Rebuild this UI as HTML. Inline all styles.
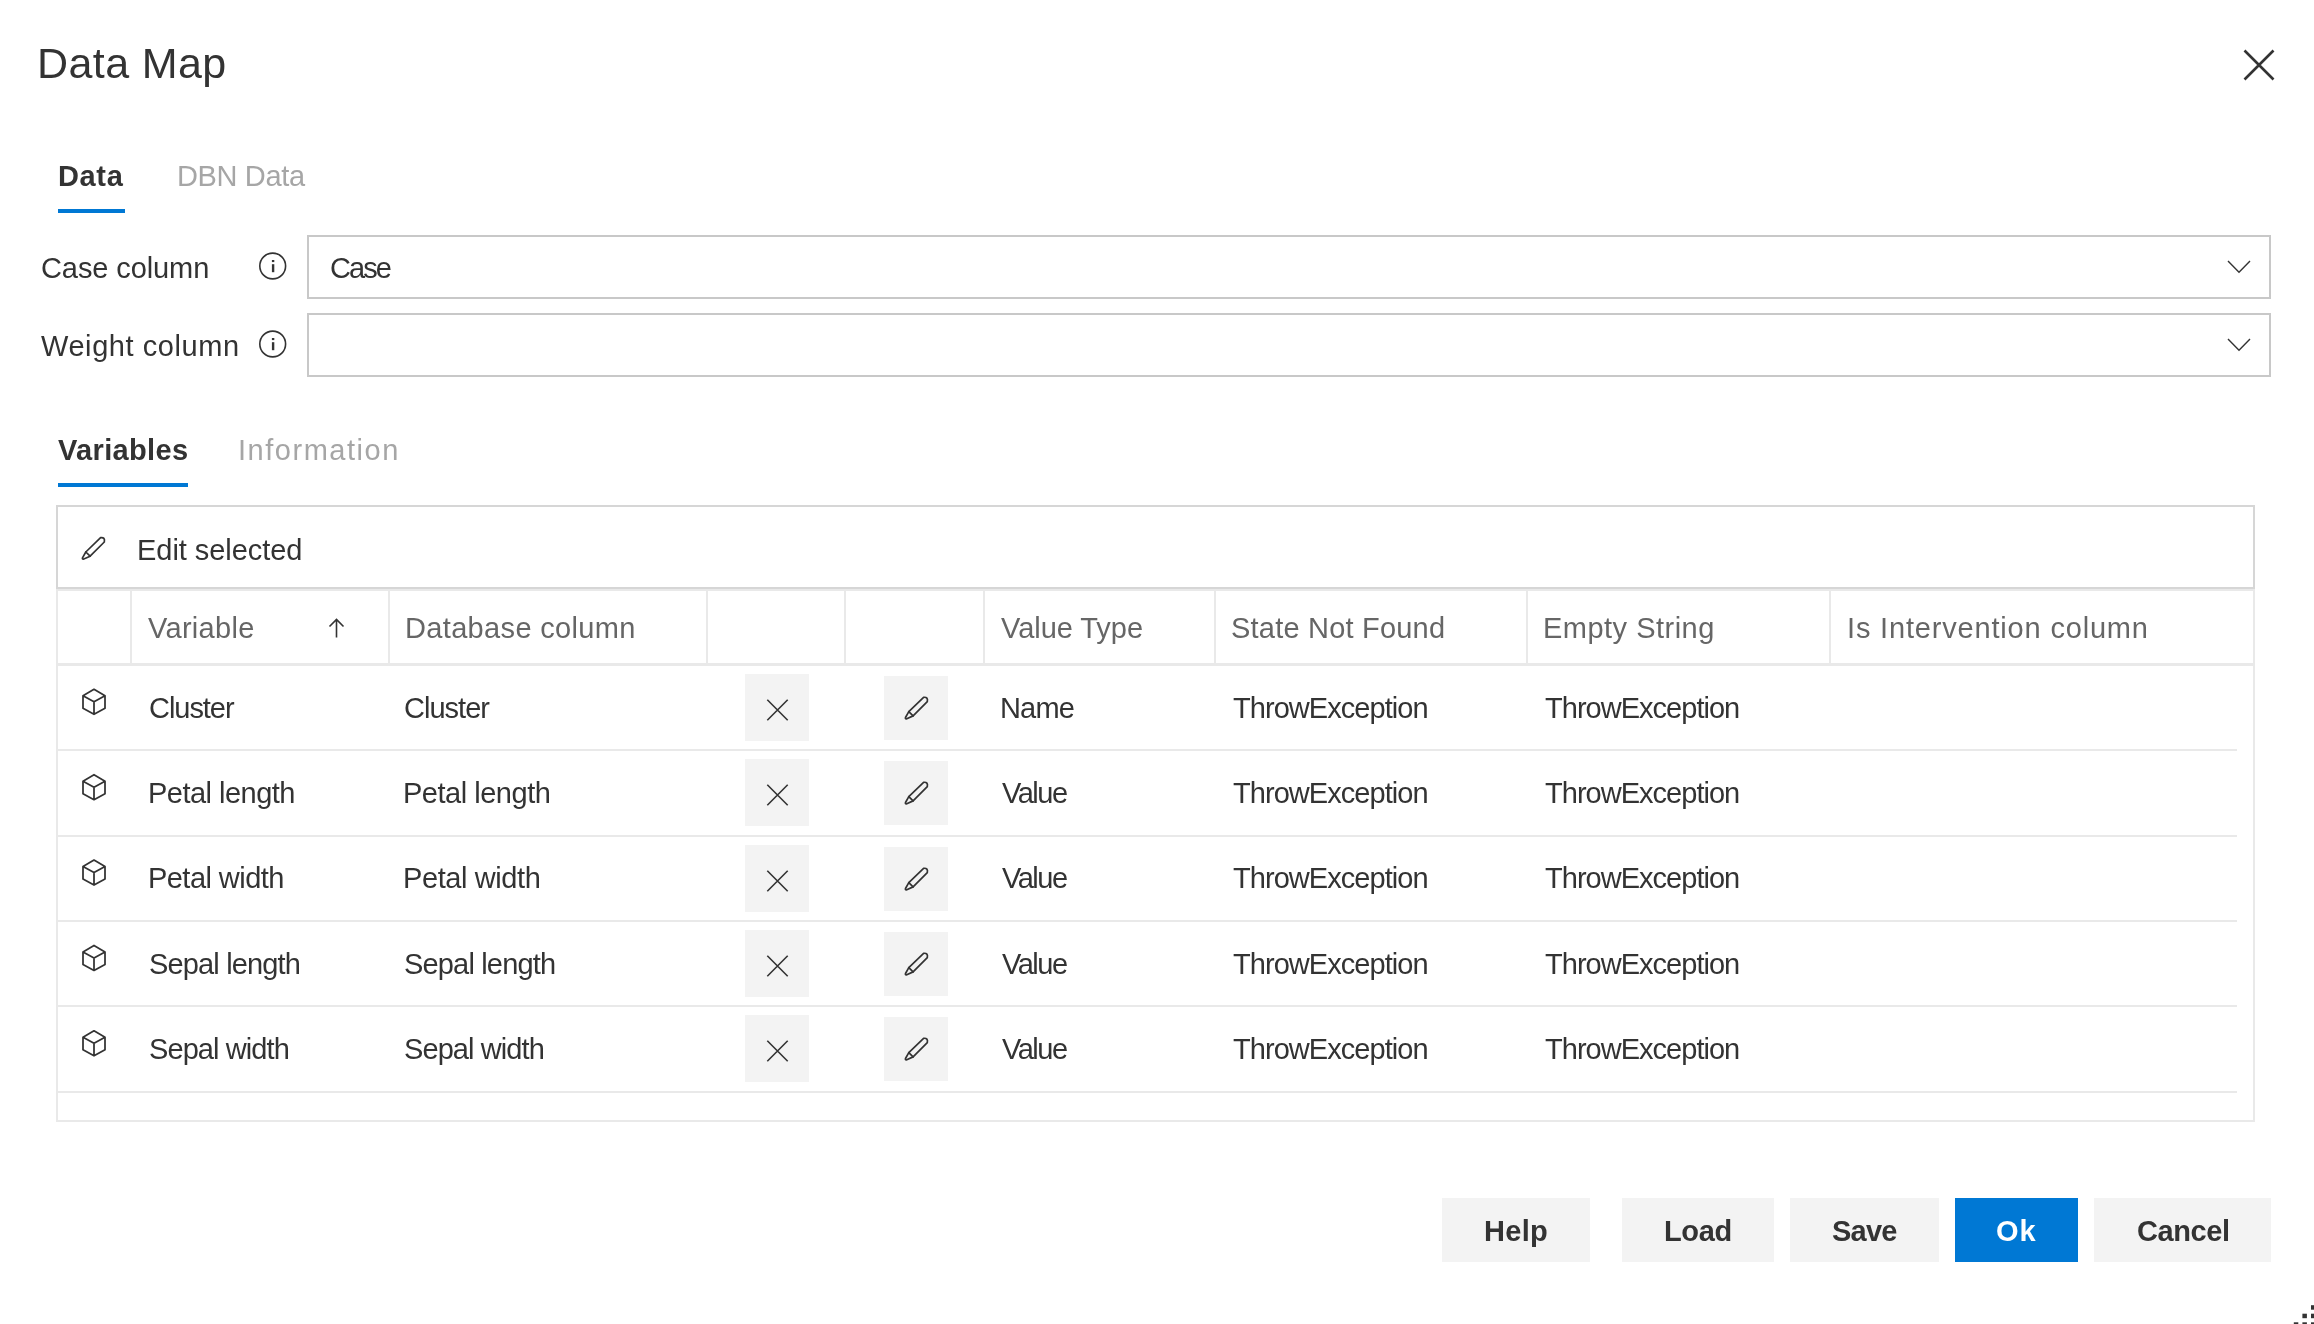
<!DOCTYPE html>
<html><head><meta charset="utf-8"><title>Data Map</title>
<style>
html,body{margin:0;padding:0;background:#fff;}
body{width:2314px;height:1324px;position:relative;overflow:hidden;font-family:"Liberation Sans",sans-serif;}
.t{position:absolute;white-space:nowrap;line-height:normal;will-change:transform;}
svg{position:absolute;left:0;top:0;}
</style></head><body>
<div style="position:absolute;left:58px;top:209px;width:67px;height:4px;background:#0078d4"></div><div style="position:absolute;left:58px;top:483px;width:130px;height:4px;background:#0078d4"></div><div style="position:absolute;left:307px;top:235px;width:1964px;height:64px;box-sizing:border-box;border:2px solid #c8c8c8;background:#fff"></div><div style="position:absolute;left:307px;top:313px;width:1964px;height:64px;box-sizing:border-box;border:2px solid #c8c8c8;background:#fff"></div><div style="position:absolute;left:56px;top:505px;width:2199px;height:84px;box-sizing:border-box;border:2px solid #d6d6d6;border-bottom-width:2px"></div><div style="position:absolute;left:56px;top:589px;width:2199px;height:533px;box-sizing:border-box;border:2px solid #e9e9e9;border-top-width:2px"></div><div style="position:absolute;left:58px;top:663px;width:2195px;height:3px;background:#e9e9e9"></div><div style="position:absolute;left:130px;top:591px;width:2px;height:72px;background:#e9e9e9"></div><div style="position:absolute;left:388px;top:591px;width:2px;height:72px;background:#e9e9e9"></div><div style="position:absolute;left:706px;top:591px;width:2px;height:72px;background:#e9e9e9"></div><div style="position:absolute;left:844px;top:591px;width:2px;height:72px;background:#e9e9e9"></div><div style="position:absolute;left:983px;top:591px;width:2px;height:72px;background:#e9e9e9"></div><div style="position:absolute;left:1214px;top:591px;width:2px;height:72px;background:#e9e9e9"></div><div style="position:absolute;left:1526px;top:591px;width:2px;height:72px;background:#e9e9e9"></div><div style="position:absolute;left:1829px;top:591px;width:2px;height:72px;background:#e9e9e9"></div><div style="position:absolute;left:58px;top:749px;width:2179px;height:2px;background:#e9e9e9"></div><div style="position:absolute;left:58px;top:835px;width:2179px;height:2px;background:#e9e9e9"></div><div style="position:absolute;left:58px;top:920px;width:2179px;height:2px;background:#e9e9e9"></div><div style="position:absolute;left:58px;top:1005px;width:2179px;height:2px;background:#e9e9e9"></div><div style="position:absolute;left:58px;top:1091px;width:2179px;height:2px;background:#e9e9e9"></div><div style="position:absolute;left:745px;top:674px;width:64px;height:67px;background:#f3f3f3"></div><div style="position:absolute;left:884px;top:676px;width:64px;height:64px;background:#f3f3f3"></div><div style="position:absolute;left:745px;top:759px;width:64px;height:67px;background:#f3f3f3"></div><div style="position:absolute;left:884px;top:761px;width:64px;height:64px;background:#f3f3f3"></div><div style="position:absolute;left:745px;top:845px;width:64px;height:67px;background:#f3f3f3"></div><div style="position:absolute;left:884px;top:847px;width:64px;height:64px;background:#f3f3f3"></div><div style="position:absolute;left:745px;top:930px;width:64px;height:67px;background:#f3f3f3"></div><div style="position:absolute;left:884px;top:932px;width:64px;height:64px;background:#f3f3f3"></div><div style="position:absolute;left:745px;top:1015px;width:64px;height:67px;background:#f3f3f3"></div><div style="position:absolute;left:884px;top:1017px;width:64px;height:64px;background:#f3f3f3"></div><div style="position:absolute;left:1442px;top:1198px;width:148px;height:64px;background:#f3f3f3"></div><div style="position:absolute;left:1622px;top:1198px;width:152px;height:64px;background:#f3f3f3"></div><div style="position:absolute;left:1790px;top:1198px;width:149px;height:64px;background:#f3f3f3"></div><div style="position:absolute;left:1955px;top:1198px;width:123px;height:64px;background:#0078d4"></div><div style="position:absolute;left:2094px;top:1198px;width:177px;height:64px;background:#f3f3f3"></div>
<div class="t" id="title" style="left:37.00px;top:39.00px;font-size:43px;font-weight:400;color:#333;letter-spacing:0.407px">Data Map</div><div class="t" id="tab_data" style="left:58.00px;top:160.20px;font-size:29px;font-weight:700;color:#333;letter-spacing:0.633px">Data</div><div class="t" id="tab_dbn" style="left:177.10px;top:160.20px;font-size:29px;font-weight:400;color:#a6a6a6;letter-spacing:-0.353px">DBN Data</div><div class="t" id="lbl_case" style="left:40.60px;top:252.00px;font-size:29px;font-weight:400;color:#333;letter-spacing:-0.095px">Case column</div><div class="t" id="lbl_weight" style="left:40.70px;top:330.30px;font-size:29px;font-weight:400;color:#333;letter-spacing:0.570px">Weight column</div><div class="t" id="sel_case" style="left:329.80px;top:251.60px;font-size:29px;font-weight:400;color:#333;letter-spacing:-1.900px">Case</div><div class="t" id="tab_vars" style="left:58.20px;top:434.00px;font-size:29px;font-weight:700;color:#333;letter-spacing:0.333px">Variables</div><div class="t" id="tab_info" style="left:238.10px;top:434.00px;font-size:29px;font-weight:400;color:#a6a6a6;letter-spacing:1.520px">Information</div><div class="t" id="edit" style="left:136.80px;top:534.20px;font-size:29px;font-weight:400;color:#333;letter-spacing:-0.047px">Edit selected</div><div class="t" id="h_var" style="left:147.90px;top:612.30px;font-size:29px;font-weight:400;color:#666;letter-spacing:0.299px">Variable</div><div class="t" id="h_db" style="left:404.60px;top:612.30px;font-size:29px;font-weight:400;color:#666;letter-spacing:0.339px">Database column</div><div class="t" id="h_vt" style="left:1000.90px;top:612.30px;font-size:29px;font-weight:400;color:#666;letter-spacing:-0.042px">Value Type</div><div class="t" id="h_snf" style="left:1231.20px;top:612.30px;font-size:29px;font-weight:400;color:#666;letter-spacing:0.204px">State Not Found</div><div class="t" id="h_es" style="left:1542.70px;top:612.30px;font-size:29px;font-weight:400;color:#666;letter-spacing:0.484px">Empty String</div><div class="t" id="h_ic" style="left:1846.50px;top:612.30px;font-size:29px;font-weight:400;color:#666;letter-spacing:0.823px">Is Intervention column</div><div class="t" id="r0_var" style="left:148.60px;top:692.20px;font-size:29px;font-weight:400;color:#333;letter-spacing:-1.045px">Cluster</div><div class="t" id="r0_db" style="left:404.40px;top:692.20px;font-size:29px;font-weight:400;color:#333;letter-spacing:-0.982px">Cluster</div><div class="t" id="r0_vt" style="left:999.50px;top:692.20px;font-size:29px;font-weight:400;color:#333;letter-spacing:-0.823px">Name</div><div class="t" id="r0_snf" style="left:1233.00px;top:692.20px;font-size:29px;font-weight:400;color:#333;letter-spacing:-0.950px">ThrowException</div><div class="t" id="r0_es" style="left:1545.00px;top:692.20px;font-size:29px;font-weight:400;color:#333;letter-spacing:-0.979px">ThrowException</div><div class="t" id="r1_var" style="left:147.60px;top:777.00px;font-size:29px;font-weight:400;color:#333;letter-spacing:-0.518px">Petal length</div><div class="t" id="r1_db" style="left:403.40px;top:777.00px;font-size:29px;font-weight:400;color:#333;letter-spacing:-0.484px">Petal length</div><div class="t" id="r1_vt" style="left:1001.50px;top:777.00px;font-size:29px;font-weight:400;color:#333;letter-spacing:-1.472px">Value</div><div class="t" id="r1_snf" style="left:1233.00px;top:777.00px;font-size:29px;font-weight:400;color:#333;letter-spacing:-0.950px">ThrowException</div><div class="t" id="r1_es" style="left:1545.00px;top:777.00px;font-size:29px;font-weight:400;color:#333;letter-spacing:-0.979px">ThrowException</div><div class="t" id="r2_var" style="left:147.60px;top:862.00px;font-size:29px;font-weight:400;color:#333;letter-spacing:-0.551px">Petal width</div><div class="t" id="r2_db" style="left:403.40px;top:862.00px;font-size:29px;font-weight:400;color:#333;letter-spacing:-0.399px">Petal width</div><div class="t" id="r2_vt" style="left:1001.50px;top:862.00px;font-size:29px;font-weight:400;color:#333;letter-spacing:-1.472px">Value</div><div class="t" id="r2_snf" style="left:1233.00px;top:862.00px;font-size:29px;font-weight:400;color:#333;letter-spacing:-0.950px">ThrowException</div><div class="t" id="r2_es" style="left:1545.00px;top:862.00px;font-size:29px;font-weight:400;color:#333;letter-spacing:-0.979px">ThrowException</div><div class="t" id="r3_var" style="left:148.60px;top:948.00px;font-size:29px;font-weight:400;color:#333;letter-spacing:-0.846px">Sepal length</div><div class="t" id="r3_db" style="left:404.40px;top:948.00px;font-size:29px;font-weight:400;color:#333;letter-spacing:-0.829px">Sepal length</div><div class="t" id="r3_vt" style="left:1001.50px;top:948.00px;font-size:29px;font-weight:400;color:#333;letter-spacing:-1.472px">Value</div><div class="t" id="r3_snf" style="left:1233.00px;top:948.00px;font-size:29px;font-weight:400;color:#333;letter-spacing:-0.950px">ThrowException</div><div class="t" id="r3_es" style="left:1545.00px;top:948.00px;font-size:29px;font-weight:400;color:#333;letter-spacing:-0.979px">ThrowException</div><div class="t" id="r4_var" style="left:148.60px;top:1033.20px;font-size:29px;font-weight:400;color:#333;letter-spacing:-0.912px">Sepal width</div><div class="t" id="r4_db" style="left:404.40px;top:1033.20px;font-size:29px;font-weight:400;color:#333;letter-spacing:-0.912px">Sepal width</div><div class="t" id="r4_vt" style="left:1001.50px;top:1033.20px;font-size:29px;font-weight:400;color:#333;letter-spacing:-1.472px">Value</div><div class="t" id="r4_snf" style="left:1233.00px;top:1033.20px;font-size:29px;font-weight:400;color:#333;letter-spacing:-0.950px">ThrowException</div><div class="t" id="r4_es" style="left:1545.00px;top:1033.20px;font-size:29px;font-weight:400;color:#333;letter-spacing:-0.979px">ThrowException</div><div class="t" id="b_help" style="left:1484.00px;top:1215.00px;font-size:29px;font-weight:700;color:#333;letter-spacing:0.317px">Help</div><div class="t" id="b_load" style="left:1664.10px;top:1215.00px;font-size:29px;font-weight:700;color:#333;letter-spacing:-0.380px">Load</div><div class="t" id="b_save" style="left:1831.70px;top:1215.00px;font-size:29px;font-weight:700;color:#333;letter-spacing:-0.760px">Save</div><div class="t" id="b_ok" style="left:1996.40px;top:1215.00px;font-size:29px;font-weight:700;color:#fff;letter-spacing:0.950px">Ok</div><div class="t" id="b_cancel" style="left:2136.50px;top:1215.00px;font-size:29px;font-weight:700;color:#333;letter-spacing:-0.418px">Cancel</div>
<svg width="2314" height="1324" viewBox="0 0 2314 1324"><path d="M2244.5 50.5 L2273.5 79.5 M2273.5 50.5 L2244.5 79.5" fill="none" stroke="#333" stroke-width="2.6"/><path d="M2228 261 L2239 272.3 L2250 261" fill="none" stroke="#333" stroke-width="1.4"/><path d="M2228 339 L2239 350.3 L2250 339" fill="none" stroke="#333" stroke-width="1.4"/><circle cx="272.7" cy="266" r="12.9" fill="none" stroke="#333" stroke-width="1.6"/><rect x="271.9" y="260" width="2.4" height="2.1" fill="#333"/><rect x="271.9" y="264.2" width="2.4" height="8" fill="#333"/><circle cx="272.7" cy="344" r="12.9" fill="none" stroke="#333" stroke-width="1.6"/><rect x="271.9" y="338" width="2.4" height="2.1" fill="#333"/><rect x="271.9" y="342.2" width="2.4" height="8" fill="#333"/><g transform="translate(81.6,559.6)" fill="none" stroke="#333" stroke-width="1.7" stroke-linejoin="round" stroke-linecap="round"><path d="M4.2 -7.6 L19 -22 Q23.7 -22.6 22.7 -17.6 L8.5 -3.4 L2.2 -0.6 Q0.4 0 0.9 -1.8 Z"/><path d="M4.2 -7.6 L8.5 -3.4"/></g><path d="M336.5 637.5 V620 M329.5 626.5 L336.5 619.5 L343.5 626.5" fill="none" stroke="#333" stroke-width="1.6"/><g transform="translate(0,0.30)" fill="none" stroke="#333" stroke-width="1.75" stroke-linejoin="round"><path d="M94 689 L105 695.5 L105 708 L94 714 L83 708 L83 695.5 Z M83 695.5 L94 701.5 L105 695.5 M94 701.5 L94 714"/></g><path d="M767.3 699.8 L787.7 720.2 M787.7 699.8 L767.3 720.2" fill="none" stroke="#333" stroke-width="1.6"/><g transform="translate(904.6,719.3)" fill="none" stroke="#333" stroke-width="1.7" stroke-linejoin="round" stroke-linecap="round"><path d="M4.2 -7.6 L19 -22 Q23.7 -22.6 22.7 -17.6 L8.5 -3.4 L2.2 -0.6 Q0.4 0 0.9 -1.8 Z"/><path d="M4.2 -7.6 L8.5 -3.4"/></g><g transform="translate(0,85.67)" fill="none" stroke="#333" stroke-width="1.75" stroke-linejoin="round"><path d="M94 689 L105 695.5 L105 708 L94 714 L83 708 L83 695.5 Z M83 695.5 L94 701.5 L105 695.5 M94 701.5 L94 714"/></g><path d="M767.3 784.8 L787.7 805.2 M787.7 784.8 L767.3 805.2" fill="none" stroke="#333" stroke-width="1.6"/><g transform="translate(904.6,804.3)" fill="none" stroke="#333" stroke-width="1.7" stroke-linejoin="round" stroke-linecap="round"><path d="M4.2 -7.6 L19 -22 Q23.7 -22.6 22.7 -17.6 L8.5 -3.4 L2.2 -0.6 Q0.4 0 0.9 -1.8 Z"/><path d="M4.2 -7.6 L8.5 -3.4"/></g><g transform="translate(0,171.05)" fill="none" stroke="#333" stroke-width="1.75" stroke-linejoin="round"><path d="M94 689 L105 695.5 L105 708 L94 714 L83 708 L83 695.5 Z M83 695.5 L94 701.5 L105 695.5 M94 701.5 L94 714"/></g><path d="M767.3 870.8 L787.7 891.2 M787.7 870.8 L767.3 891.2" fill="none" stroke="#333" stroke-width="1.6"/><g transform="translate(904.6,890.3)" fill="none" stroke="#333" stroke-width="1.7" stroke-linejoin="round" stroke-linecap="round"><path d="M4.2 -7.6 L19 -22 Q23.7 -22.6 22.7 -17.6 L8.5 -3.4 L2.2 -0.6 Q0.4 0 0.9 -1.8 Z"/><path d="M4.2 -7.6 L8.5 -3.4"/></g><g transform="translate(0,256.42)" fill="none" stroke="#333" stroke-width="1.75" stroke-linejoin="round"><path d="M94 689 L105 695.5 L105 708 L94 714 L83 708 L83 695.5 Z M83 695.5 L94 701.5 L105 695.5 M94 701.5 L94 714"/></g><path d="M767.3 955.8 L787.7 976.2 M787.7 955.8 L767.3 976.2" fill="none" stroke="#333" stroke-width="1.6"/><g transform="translate(904.6,975.3)" fill="none" stroke="#333" stroke-width="1.7" stroke-linejoin="round" stroke-linecap="round"><path d="M4.2 -7.6 L19 -22 Q23.7 -22.6 22.7 -17.6 L8.5 -3.4 L2.2 -0.6 Q0.4 0 0.9 -1.8 Z"/><path d="M4.2 -7.6 L8.5 -3.4"/></g><g transform="translate(0,341.80)" fill="none" stroke="#333" stroke-width="1.75" stroke-linejoin="round"><path d="M94 689 L105 695.5 L105 708 L94 714 L83 708 L83 695.5 Z M83 695.5 L94 701.5 L105 695.5 M94 701.5 L94 714"/></g><path d="M767.3 1040.8 L787.7 1061.2 M787.7 1040.8 L767.3 1061.2" fill="none" stroke="#333" stroke-width="1.6"/><g transform="translate(904.6,1060.3)" fill="none" stroke="#333" stroke-width="1.7" stroke-linejoin="round" stroke-linecap="round"><path d="M4.2 -7.6 L19 -22 Q23.7 -22.6 22.7 -17.6 L8.5 -3.4 L2.2 -0.6 Q0.4 0 0.9 -1.8 Z"/><path d="M4.2 -7.6 L8.5 -3.4"/></g><rect x="2311.0" y="1305.2" width="4.5" height="4.5" fill="#333"/><rect x="2302.4" y="1313.7" width="4.5" height="4.5" fill="#333"/><rect x="2311.0" y="1313.7" width="4.5" height="4.5" fill="#333"/><rect x="2293.8" y="1322.3" width="4.5" height="4.5" fill="#333"/><rect x="2302.4" y="1322.3" width="4.5" height="4.5" fill="#333"/><rect x="2311.0" y="1322.3" width="4.5" height="4.5" fill="#333"/></svg>
</body></html>
